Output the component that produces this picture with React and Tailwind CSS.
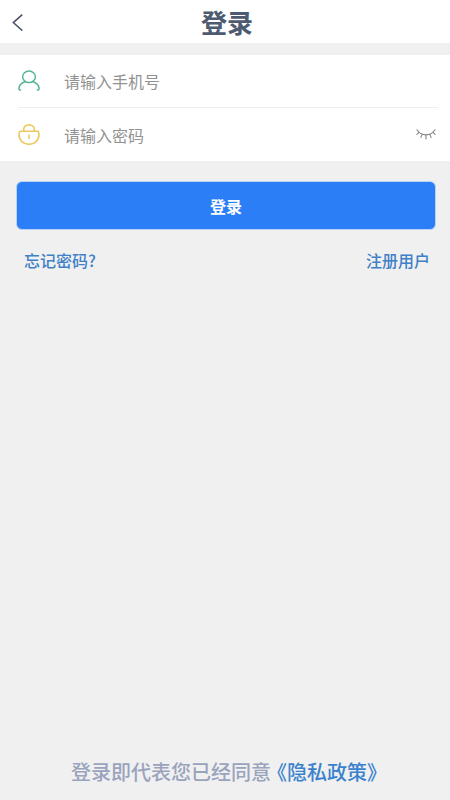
import { useState } from 'react';

function BackIcon() {
  return (
    <svg width="12" height="18" viewBox="0 0 12 18" fill="none" stroke="#4a5068" strokeWidth="1.5" aria-hidden="true">
      <path d="M10.3 1.600 1.300 9.600l9 8" />
    </svg>
  );
}

function UserIcon() {
  return (
    <svg width="22" height="22" viewBox="0 0 22 22" fill="none" stroke="#55b591" strokeWidth="1.5" strokeLinecap="round" aria-hidden="true">
      <ellipse cx="11" cy="6.8" rx="6.4" ry="5.8" />
      <path d="M7 11.800C3.400 13 1 15.800.9 18.600c0 1.200.8 1.600 1.700 1.400M15 11.800c3.600 1.200 6 4 6.100 6.800 0 1.200-.8 1.600-1.700 1.400" />
    </svg>
  );
}

function LockIcon() {
  return (
    <svg width="22" height="22" viewBox="0 0 22 22" fill="none" stroke="#ecc860" strokeWidth="1.6" strokeLinecap="round" strokeLinejoin="round" aria-hidden="true">
      <path d="M2 7.200h18c.7 1 1 2.400 1 3.600 0 5.400-4.500 9.600-10 9.600S1 16.200 1 10.800c0-1.200.3-2.600 1-3.600Z" />
      <path d="M5.700 7V5.700C5.700 2.800 8 .9 11 .9s5.300 1.900 5.300 4.800V7M11 11.400v2.800" />
    </svg>
  );
}

function ClosedEyeIcon() {
  return (
    <svg width="20" height="12" viewBox="0 0 20 12" fill="none" stroke="#858585" strokeWidth="1.1" strokeLinecap="round" aria-hidden="true">
      <path d="M1 .8C3 4 6 5.900 10 5.900s7-1.900 9-5.100" />
      <path d="M3 3.400.9 5.300M6.200 5.300 4.900 8.400M10 6v4M13.800 5.300l1.300 3.100M17 3.400l2.100 1.900" />
    </svg>
  );
}

const inputStyle =
  'min-w-0 flex-1 bg-transparent text-base text-[#555] outline-none placeholder:text-[#929292]';

export default function App() {
  const [visible, setVisible] = useState(false);

  return (
    <div className="flex min-h-screen flex-col bg-[#f0f0f0] font-['Noto_Sans_CJK_SC',sans-serif]">
      <header className="grid h-[43px] grid-cols-[1fr_auto_1fr] items-center bg-white pr-2 pl-3">
        <button type="button" aria-label="返回" className="justify-self-start py-1">
          <BackIcon />
        </button>
        <h1 className="text-[26px] leading-10 font-bold text-[#4d5a70]">登录</h1>
      </header>

      <form className="mt-3" onSubmit={(e) => e.preventDefault()}>
        <div className="bg-white pr-3 pl-[18px]">
          <div className="flex h-[53px] items-center border-b border-[#eeeeee]">
            <label htmlFor="phone" aria-label="手机号" className="w-[46px] shrink-0">
              <UserIcon />
            </label>
            <input id="phone" type="tel" placeholder="请输入手机号" className={inputStyle} />
          </div>
          <div className="flex h-[53px] items-center">
            <label htmlFor="password" aria-label="密码" className="w-[46px] shrink-0">
              <LockIcon />
            </label>
            <input
              id="password"
              type={visible ? 'text' : 'password'}
              placeholder="请输入密码"
              className={inputStyle}
            />
            <button type="button" aria-label="显示密码" className="px-0.5 py-2" onClick={() => setVisible(!visible)}>
              <ClosedEyeIcon />
            </button>
          </div>
        </div>

        <div className="pt-5 pr-3.5 pl-4">
          <button
            type="submit"
            className="h-[49px] w-full rounded-md border border-[#b9d3f8] bg-[#2c7ef6] text-base font-bold text-white"
          >
            登录
          </button>
        </div>
      </form>

      <nav className="flex justify-between px-5 pt-[18px] text-base font-medium text-[#3f80c6]">
        <a href="#forgot" className="pl-1">忘记密码?</a>
        <a href="#register">注册用户</a>
      </nav>

      <footer className="mt-auto pb-3 pl-2 text-center text-xl leading-8 font-medium text-[#9aa3bd]">
        登录即代表您已经同意
        <a href="#privacy" className="-ml-1 text-[#3b82cd]">《隐私政策》</a>
      </footer>
    </div>
  );
}
